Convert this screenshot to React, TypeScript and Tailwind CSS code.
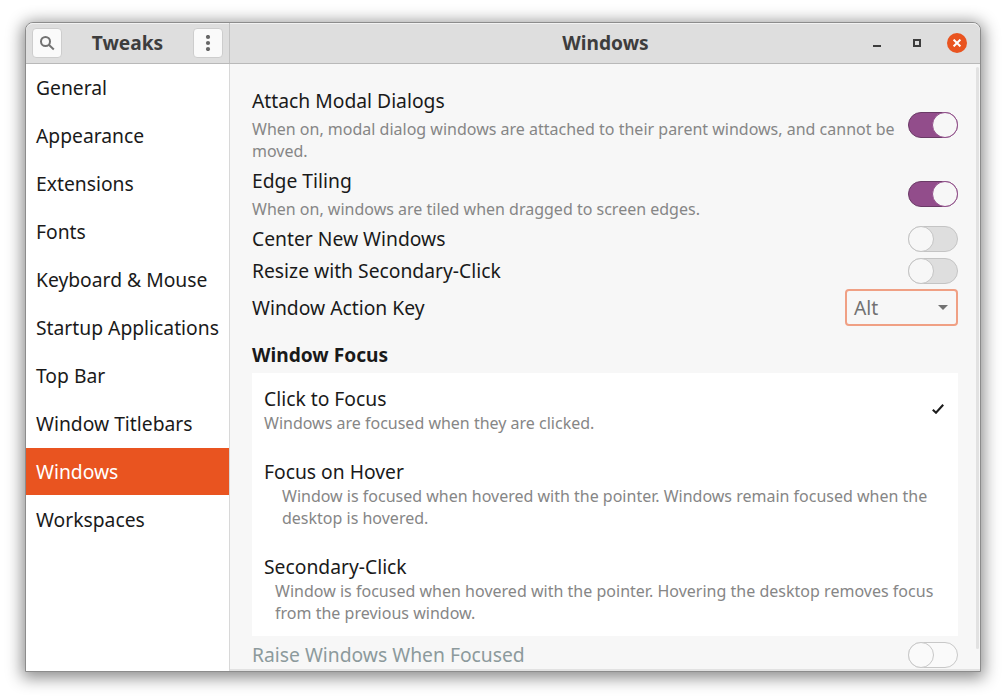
import React from "react";

const sections = [
  "General",
  "Appearance",
  "Extensions",
  "Fonts",
  "Keyboard & Mouse",
  "Startup Applications",
  "Top Bar",
  "Window Titlebars",
  "Windows",
  "Workspaces",
];

function Toggle({ on = false, disabled = false }: { on?: boolean; disabled?: boolean }) {
  const track = on
    ? "justify-end border-[#6a3a66] bg-[#924d8b]"
    : disabled
      ? "justify-start border-[#c8c8c8] bg-[#fafafa]"
      : "justify-start border-[#c4c4c4] bg-[#dedede]";
  const knob = on ? "border-[#924d8b] bg-[#f7f7f7]" : disabled ? "border-[#c8c8c8] bg-[#fafafa]" : "border-[#c4c4c4] bg-[#f7f7f7]";
  return (
    <button
      role="switch"
      aria-checked={on}
      disabled={disabled}
      className={`flex h-[26px] w-[50px] shrink-0 items-center rounded-full border ${track}`}
    >
      <span className={`-mx-px size-[26px] shrink-0 rounded-full border ${knob}`} />
    </button>
  );
}

function Lines({ lines }: { lines: string[] }) {
  return (
    <p className="text-[16px] leading-[22px] whitespace-nowrap text-[#868686]">
      {lines.map((line) => (
        <span key={line} className="block">
          {line}
        </span>
      ))}
    </p>
  );
}

function FocusOption({ title, lines, indent, checked = false }: { title: string; lines: string[]; indent: string; checked?: boolean }) {
  return (
    <li className="flex items-center justify-between pt-[13px] pr-[14px] pb-3 pl-3">
      <div>
        <h3 className="leading-[26px]">{title}</h3>
        <div className={indent}>
          <Lines lines={lines} />
        </div>
      </div>
      {checked && (
        <svg width="12" height="10" viewBox="0 0 12 10" className="mb-[3px] shrink-0">
          <path d="M.8 5.7 4 8.7 11.2.8" fill="none" stroke="#1c1c1c" strokeWidth="2.1" />
        </svg>
      )}
    </li>
  );
}

export default function App() {
  return (
    <div className="h-[700px] w-[1006px] overflow-hidden bg-white pt-[22px] pl-[25px] font-['Noto_Sans',sans-serif] text-[19.3px] text-[#1a1a1a]">
      <div className="flex h-[650px] w-[956px] flex-col overflow-hidden rounded-t-[8px] border border-[#8c8c8c] bg-[#f7f7f7] shadow-[0_3px_16px_3px_rgba(0,0,0,0.45)]">
        <header className="flex h-[41px] shrink-0 rounded-t-[7px] border-b border-[#b9b9b9] bg-[#dedede] text-[19.15px] font-bold text-[#3d3d3d] shadow-[inset_0_1px_0_#f2f2f2]">
          <div className="flex w-[204px] shrink-0 items-center justify-between border-r border-[#c2c2c2] px-[6px]">
            <button aria-label="Search" className="flex size-[30px] items-center justify-center rounded-[4px] border border-[#cdcdcd] bg-[#fafafa]">
              <svg width="16" height="16" viewBox="0 0 16 16" fill="none" stroke="#727272" strokeWidth="2">
                <circle cx="6.5" cy="6.5" r="4.5" />
                <path d="m9.8 9.8 5 4.7" />
              </svg>
            </button>
            <h1 className="leading-[26px]">Tweaks</h1>
            <button aria-label="Menu" className="flex size-[30px] items-center justify-center rounded-[4px] border border-[#cdcdcd] bg-[#fafafa]">
              <svg width="16" height="16" viewBox="0 0 16 16" fill="#666666">
                <circle cx="8" cy="2" r="2.1" />
                <circle cx="8" cy="8" r="2.1" />
                <circle cx="8" cy="14" r="2.1" />
              </svg>
            </button>
          </div>
          <div className="flex flex-1 items-center pr-[13px]">
            <h2 className="flex-1 pl-[108px] text-center leading-[26px]">Windows</h2>
            <div className="flex items-center">
              <button aria-label="Minimize" className="mr-8 flex h-2 w-2 items-end">
                <span className="h-[2px] w-2 bg-[#3d3d3d]" />
              </button>
              <button aria-label="Maximize" className="mr-[26px] size-2 border-2 border-[#3d3d3d]" />
              <button aria-label="Close" className="flex size-5 items-center justify-center rounded-full bg-[#e95420]">
                <svg width="8" height="8" viewBox="0 0 8 8" stroke="#ffffff" strokeWidth="2">
                  <path d="m.6.6 6.8 6.8M7.4.6.6 7.4" />
                </svg>
              </button>
            </div>
          </div>
        </header>

        <div className="flex min-h-0 flex-1">
          <nav className="w-[204px] shrink-0 border-r border-[#d8d8d8] bg-white">
            {sections.map((name) => (
              <a
                key={name}
                className={`mb-px flex h-[47px] items-center pt-px pl-[10px] leading-[26px] whitespace-nowrap ${name === "Windows" ? "bg-[#e95420] text-white" : ""}`}
              >
                {name}
              </a>
            ))}
          </nav>

          <main className="flex min-w-0 flex-1 border-b-2 border-[#e2e2e2]">
            <div className="w-[728px] shrink-0 overflow-hidden pt-6 pl-[22px]">
              <div className="flex items-center justify-between">
                <div>
                  <h3 className="mb-1 leading-[26px]">Attach Modal Dialogs</h3>
                  <Lines lines={["When on, modal dialog windows are attached to their parent windows, and cannot be", "moved."]} />
                </div>
                <Toggle on />
              </div>
              <div className="mt-[6px] flex items-center justify-between">
                <div>
                  <h3 className="mb-1 leading-[26px]">Edge Tiling</h3>
                  <Lines lines={["When on, windows are tiled when dragged to screen edges."]} />
                </div>
                <Toggle on />
              </div>
              <div className="mt-[6px] flex items-center justify-between leading-[26px]">
                <h3>Center New Windows</h3>
                <Toggle />
              </div>
              <div className="mt-[6px] flex items-center justify-between leading-[26px]">
                <h3>Resize with Secondary-Click</h3>
                <Toggle />
              </div>
              <div className="mt-[5px] flex items-center justify-between leading-[26px]">
                <h3 className="pt-px">Window Action Key</h3>
                <button className="flex h-[37px] w-[113px] items-center justify-between rounded-[4px] border-2 border-[#f0a084] bg-[#f7f7f7] pr-[8px] pl-[7px] text-[#727272]">
                  <span className="pt-px">Alt</span>
                  <svg width="10" height="5" viewBox="0 0 10 5" fill="#727272">
                    <path d="M0 0h10L5 5Z" />
                  </svg>
                </button>
              </div>
              <h2 className="mt-4 text-[19.15px] leading-[26px] font-bold">Window Focus</h2>
              <ul className="mt-[5px] bg-white">
                <FocusOption checked title="Click to Focus" indent="" lines={["Windows are focused when they are clicked."]} />
                <FocusOption
                  title="Focus on Hover"
                  indent="pl-[18px]"
                  lines={["Window is focused when hovered with the pointer. Windows remain focused when the", "desktop is hovered."]}
                />
                <FocusOption
                  title="Secondary-Click"
                  indent="pl-[11px] tracking-[0.015px]"
                  lines={["Window is focused when hovered with the pointer. Hovering the desktop removes focus", "from the previous window."]}
                />
              </ul>
              <div className="mt-[6px] flex items-center justify-between leading-[26px] text-[#8c9a9c]">
                <h3>Raise Windows When Focused</h3>
                <Toggle disabled />
              </div>
            </div>
            <div className="ml-[18px] flex-1 pt-[3px]">
              <div className="h-[582px] w-[3px] rounded-full bg-[#e2e2e2]" />
            </div>
          </main>
        </div>
      </div>
    </div>
  );
}
